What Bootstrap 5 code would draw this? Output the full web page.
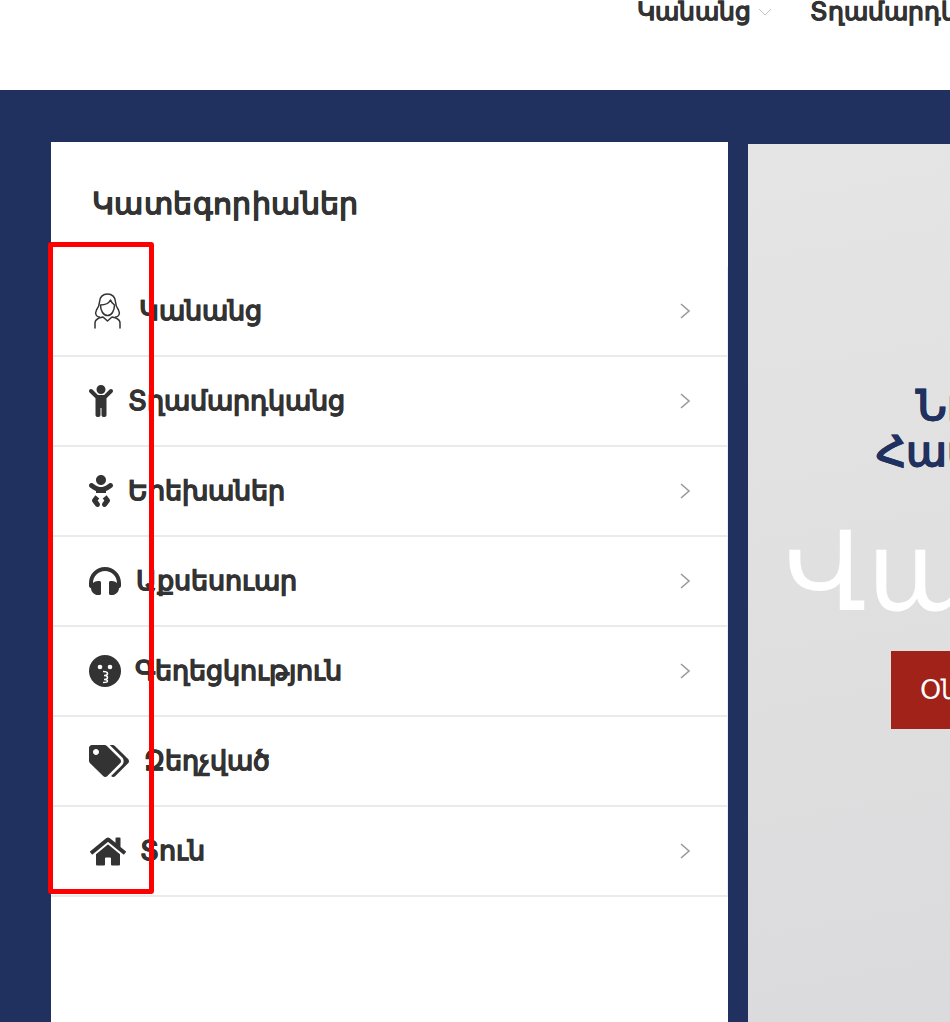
<!DOCTYPE html>
<html lang="hy">

<head>
  <meta charset="UTF-8">
  <meta name="viewport" content="width=device-width, initial-scale=1.0">
  <title>Կատեգորիաներ</title>
  <link rel="stylesheet" href="https://cdn.jsdelivr.net/npm/bootstrap@5.3.0/dist/css/bootstrap.min.css">
  <style>
    html, body { height: 1022px; overflow: hidden; }
    body { font-family: "Liberation Sans", sans-serif; color: #333; background: #fff; position: relative; }
    .top-bar { height: 90px; gap: 38px; padding-left: 637px; white-space: nowrap; overflow: hidden; }
    .top-link { font-size: 24.6px; font-weight: 700; line-height: 24px; color: #333; text-decoration: none; -webkit-text-stroke: .35px #333; }
    .top-caret { width: 14px; height: 8px; margin-left: 7px; }
    .main-band { background: #21315f; height: 932px; padding: 52px 0 0 51px; gap: 20px; width: 1400px; }
    .cat-panel { width: 677px; height: 880px; background: #fff; flex: none; }
    .cat-title { font-size: 30.2px; letter-spacing: .4px; font-weight: 700; line-height: 32px; padding: 46px 0 0 41px; height: 125px; margin: 0; color: #333; -webkit-text-stroke: .2px #333; }
    .cat-item { height: 90px; border-bottom: 2px solid #eaeaea; padding-left: 38px; padding-right: 36px; border-right: 1px solid #efedf8; color: #333; text-decoration: none; font-size: 26.6px; font-weight: 700; -webkit-text-stroke: .4px #333; }
    .cat-label { padding-top: 2px; }
    .cat-arrow { margin-left: auto; width: 12px; height: 18px; flex: none; }
    .ico { flex: none; fill: #333; display: block; }
    .ico-woman { width: 27px; height: 36px; margin: 0 18px 0 5px; }
    .ico-child { width: 24px; height: 32px; margin-right: 15px; }
    .ico-phones { width: 32px; height: 28px; margin-right: 15px; }
    .ico-kiss { width: 32px; height: 32px; margin-right: 14px; }
    .ico-tags { width: 40px; height: 32px; margin-right: 15px; }
    .ico-home { width: 36px; height: 29px; margin: 0 14px 0 1px; }
    .hero { margin-top: 2px; width: 640px; height: 878px; background: linear-gradient(170deg, #e5e5e5, #dadadc); text-align: center; flex: none; padding-top: 239px; }
    .hero-sub { font-size: 42px; line-height: 46px; font-weight: 700; color: #21315f; margin: 0; white-space: nowrap; -webkit-text-stroke: .3px #21315f; }
    .hero-big { font-size: 110px; line-height: 118px; color: #fff; margin: 38px 62px 0 0; font-weight: 400; white-space: nowrap; }
    .hero-btn { background: #a12219; color: #fff; border: 0; border-radius: 0; width: 354px; height: 78px; font-size: 27px; margin-top: 20px; white-space: nowrap; }
    .red-mark { position: absolute; left: 48px; top: 242px; width: 106px; height: 652px; border: 5px solid #fe0000; border-radius: 3px; }
  </style>
</head>

<body>

  <div class="top-bar d-flex align-items-start">
    <a class="top-link d-flex align-items-center" href="#">Կանանց
      <svg class="top-caret" viewBox="0 0 14 8"><path d="M1 1l6 6 6-6" fill="none" stroke="#c4c4c4" stroke-width="1"/></svg>
    </a>
    <a class="top-link" href="#">Տղամարդկանց</a>
  </div>

  <div class="main-band d-flex">
    <div class="cat-panel">
      <h2 class="cat-title">Կատեգորիաներ</h2>
      <div class="d-flex flex-column">
        <a class="cat-item d-flex align-items-center" href="#">
          <svg class="ico ico-woman" viewBox="0 0 27 36"><g fill="none" stroke="#333" stroke-width="1.5" stroke-linecap="round" stroke-linejoin="round"><path d="M5.500 9c0-5 3.500-8 8-8s8 3 8 8c0 3 1 5 3 8 2 4 0 7-3 7M5.500 9c0 3-1 5-3 8-2 4 0 7 3 7"/><path d="M6.500 12c4 0 8-1 10-5 1 3 2.500 4 4 5 0 6-3 10.500-7 10.500s-7-4.500-7-10.500z"/><path d="M1 35v-5c0-3 2-4 4-5l4-1 4.500 4 4.500-4 4 1c2 1 4 2 4 5v5"/></g></svg>
          <span class="cat-label">Կանանց</span>
          <svg class="cat-arrow" viewBox="0 0 12 18"><path d="M2 2l8 7-8 7" fill="none" stroke="#9a9a9a" stroke-width="1.6"/></svg>
        </a>
        <a class="cat-item d-flex align-items-center" href="#">
          <svg class="ico ico-child" viewBox="0 0 384 512"><path d="M120 72c0-39.765 32.235-72 72-72s72 32.235 72 72c0 39.764-32.235 72-72 72s-72-32.236-72-72zm254.627 1.373c-12.496-12.497-32.758-12.497-45.254 0L242.745 160H141.254L54.627 73.373c-12.496-12.497-32.758-12.497-45.254 0-12.497 12.497-12.497 32.758 0 45.254L104 213.254V480c0 17.673 14.327 32 32 32h16c17.673 0 32-14.327 32-32V368h16v112c0 17.673 14.327 32 32 32h16c17.673 0 32-14.327 32-32V213.254l94.627-94.627c12.497-12.497 12.497-32.757 0-45.254z"/></svg>
          <span class="cat-label">Տղամարդկանց</span>
          <svg class="cat-arrow" viewBox="0 0 12 18"><path d="M2 2l8 7-8 7" fill="none" stroke="#9a9a9a" stroke-width="1.6"/></svg>
        </a>
        <a class="cat-item d-flex align-items-center" href="#">
          <svg class="ico ico-child" viewBox="0 0 384 512"><path d="M192 160c44.200 0 80-35.800 80-80S236.200 0 192 0s-80 35.800-80 80 35.800 80 80 80zm-53.400 248.800l25.600-32-61.500-51.200L56.800 383c-11.400 14.200-11.700 34.400-.8 49l48 64c7.900 10.500 19.900 16 32 16 8.300 0 16.800-2.600 24-8 17.700-13.200 21.200-38.300 8-56l-29.400-39.200zm142.700-83.200l-61.500 51.200 25.600 32L216 448c-13.200 17.700-9.700 42.800 8 56 7.200 5.400 15.600 8 24 8 12.200 0 24.200-5.500 32-16l48-64c10.900-14.600 10.600-34.800-.8-49l-45.900-57.400zM376.700 145c-12.700-18.100-37.600-22.400-55.700-9.800l-40.600 28.500c-52.700 37-124.200 37-176.800 0L63 135.300C44.900 122.600 20 127 7.300 145-5.400 163.100-1 188 17 200.700l40.600 28.500c17 11.900 35.400 20.900 54.400 27.900V288h160v-30.800c19-7 37.400-16 54.400-27.900l40.600-28.500c18.100-12.800 22.400-37.700 9.700-55.800z"/></svg>
          <span class="cat-label">Երեխաներ</span>
          <svg class="cat-arrow" viewBox="0 0 12 18"><path d="M2 2l8 7-8 7" fill="none" stroke="#9a9a9a" stroke-width="1.6"/></svg>
        </a>
        <a class="cat-item d-flex align-items-center" href="#">
          <svg class="ico ico-phones" viewBox="0 32 512 448"><path d="M256 32C114.520 32 0 146.496 0 288v48a32 32 0 0 0 17.689 28.622l14.383 7.191C34.083 431.903 83.421 480 144 480h24c13.255 0 24-10.745 24-24V280c0-13.255-10.745-24-24-24h-24c-31.342 0-59.671 12.879-80 33.627V288c0-105.869 86.131-192 192-192s192 86.131 192 192v1.627C427.671 268.879 399.342 256 368 256h-24c-13.255 0-24 10.745-24 24v176c0 13.255 10.745 24 24 24h24c60.579 0 109.917-48.098 111.928-108.187l14.382-7.191A32 32 0 0 0 512 336v-48c0-141.504-114.520-256-256-256z"/></svg>
          <span class="cat-label">Աքսեսուար</span>
          <svg class="cat-arrow" viewBox="0 0 12 18"><path d="M2 2l8 7-8 7" fill="none" stroke="#9a9a9a" stroke-width="1.6"/></svg>
        </a>
        <a class="cat-item d-flex align-items-center" href="#">
          <svg class="ico ico-kiss" viewBox="0 0 32 32"><circle cx="16" cy="16" r="16"/><circle cx="11" cy="12" r="2.300" fill="#fff"/><circle cx="21" cy="12" r="2.300" fill="#fff"/><path d="M14 16.500c3 0 4.500 1 4.500 2s-1.500 2-3.500 2c2 0 3.500 1 3.500 2s-1.500 2-3.500 2c2 0 3.500 1 3.500 1.800s-1.500 1.200-4.500 1.200" fill="none" stroke="#fff" stroke-width="1.500"/></svg>
          <span class="cat-label">Գեղեցկություն</span>
          <svg class="cat-arrow" viewBox="0 0 12 18"><path d="M2 2l8 7-8 7" fill="none" stroke="#9a9a9a" stroke-width="1.6"/></svg>
        </a>
        <a class="cat-item d-flex align-items-center" href="#">
          <svg class="ico ico-tags" viewBox="0 0 640 512"><path d="M497.941 225.941L286.059 14.059A48 48 0 0 0 252.118 0H48C21.490 0 0 21.490 0 48v204.118a48 48 0 0 0 14.059 33.941l211.882 211.882c18.744 18.745 49.136 18.746 67.882 0l204.118-204.118c18.745-18.745 18.745-49.137 0-67.882zM112 160c-26.510 0-48-21.490-48-48s21.490-48 48-48 48 21.490 48 48-21.490 48-48 48zm513.941 133.823L421.823 497.941c-18.745 18.745-49.137 18.745-67.882 0l-.360-.360L527.640 323.522c16.999-16.999 26.360-39.600 26.360-63.640s-9.362-46.641-26.360-63.640L331.397 0h48.721a48 48 0 0 1 33.941 14.059l211.882 211.882c18.745 18.745 18.745 49.137 0 67.882z"/></svg>
          <span class="cat-label">Զեղչված</span>
        </a>
        <a class="cat-item d-flex align-items-center" href="#">
          <svg class="ico ico-home" viewBox="0 32 576 448"><path d="M280.370 148.260L96 300.110V464a16 16 0 0 0 16 16l112.060-.290a16 16 0 0 0 15.920-16V368a16 16 0 0 1 16-16h64a16 16 0 0 1 16 16v95.640a16 16 0 0 0 16 16.050L464 480a16 16 0 0 0 16-16V300L295.670 148.260a12.190 12.190 0 0 0-15.300 0zM571.600 251.470L488 182.560V44.050a12 12 0 0 0-12-12h-56a12 12 0 0 0-12 12v72.610L318.470 43a48 48 0 0 0-61 0L4.340 251.470a12 12 0 0 0-1.600 16.900l25.500 31A12 12 0 0 0 45.150 301l235.220-193.740a12.190 12.190 0 0 1 15.300 0L530.900 301a12 12 0 0 0 16.900-1.600l25.500-31a12 12 0 0 0-1.700-16.930z"/></svg>
          <span class="cat-label">Տուն</span>
          <svg class="cat-arrow" viewBox="0 0 12 18"><path d="M2 2l8 7-8 7" fill="none" stroke="#9a9a9a" stroke-width="1.6"/></svg>
        </a>
      </div>
    </div>
    <div class="hero">
      <p class="hero-sub">Նորաձև ոճեր<br>Հավաքածու 2024</p>
      <p class="hero-big">Վաճառք</p>
      <button class="btn hero-btn" type="button">Օնլայն խանութ այժմ</button>
    </div>
  </div>

  <div class="red-mark"></div>

</body>

</html>
